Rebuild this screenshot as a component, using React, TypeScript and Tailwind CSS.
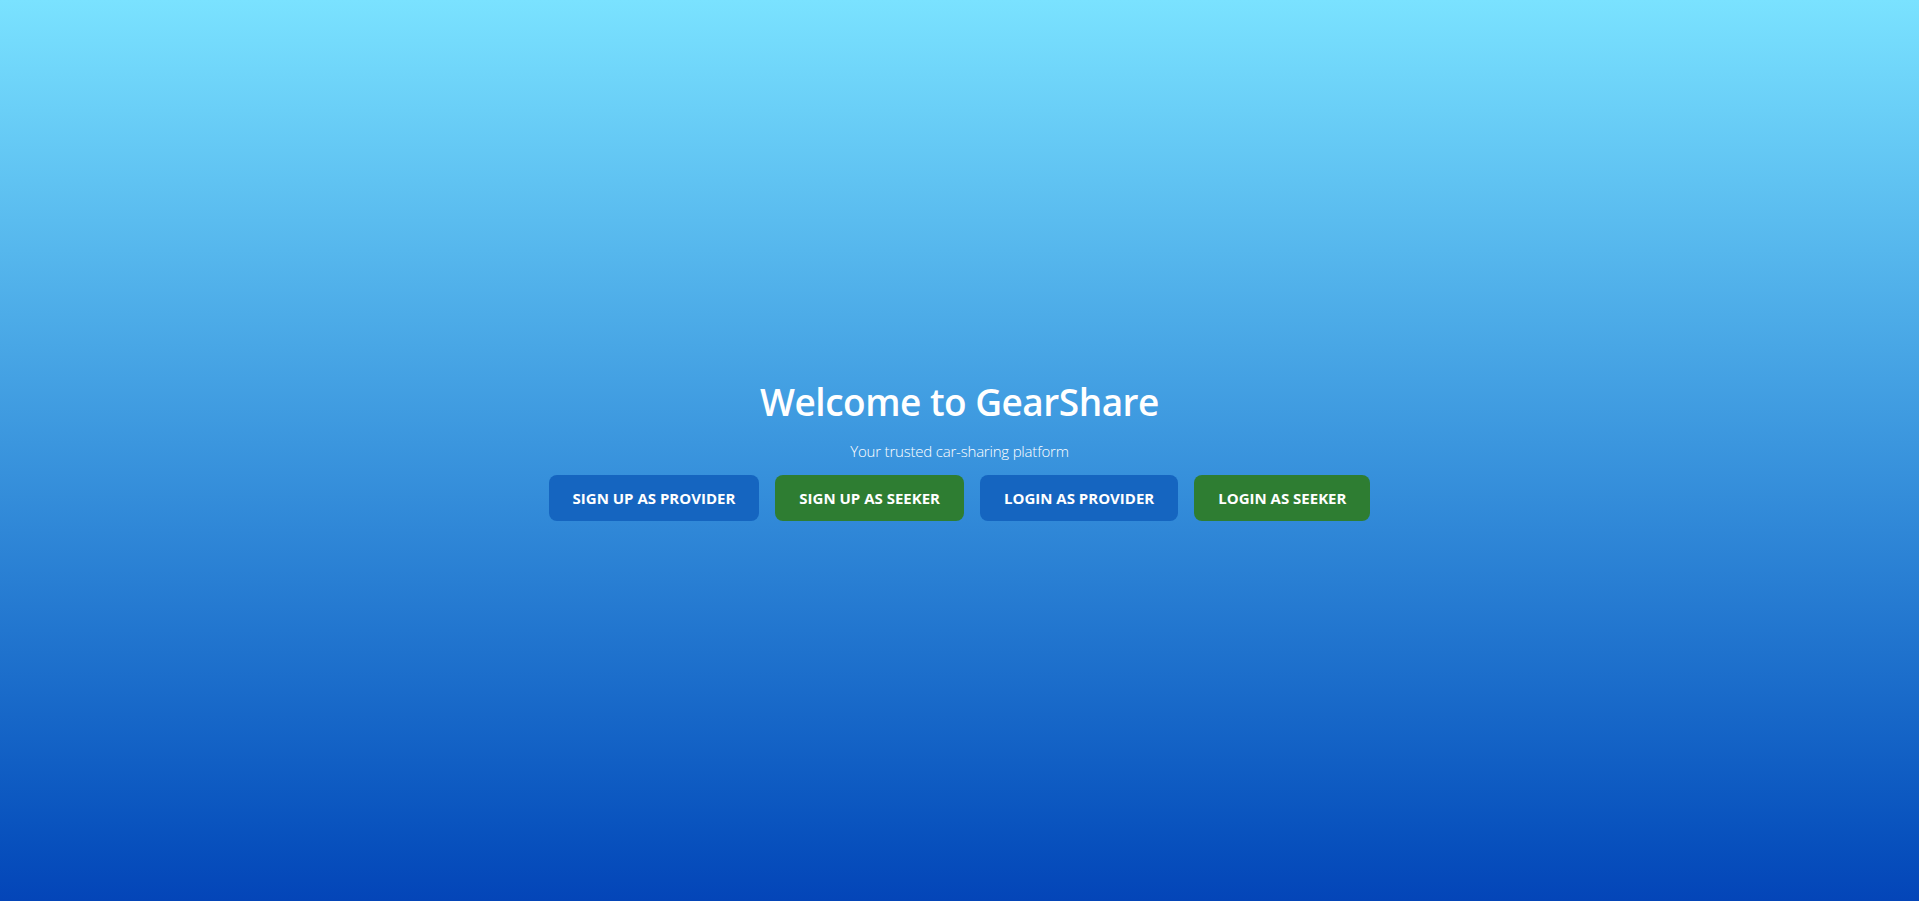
export default function App() {
  const buttons = [
    { label: 'Sign up as Provider', color: 'bg-[#1565c0]' },
    { label: 'Sign up as Seeker', color: 'bg-[#2e7d32]' },
    { label: 'Login as Provider', color: 'bg-[#1565c0]' },
    { label: 'Login as Seeker', color: 'bg-[#2e7d32]' },
  ];

  return (
    <main className="min-h-screen flex flex-col items-center justify-center bg-linear-to-b from-[#7ae2ff] to-[#0445b8] text-white font-['Open_Sans',sans-serif]">
      <h1 className="text-[37px] font-semibold leading-[1.2] tracking-[-0.5px]">Welcome to GearShare</h1>
      <p className="mt-4 text-[15px] font-light tracking-[-0.2px]">Your trusted car-sharing platform</p>
      <div className="mt-3 flex gap-4">
        {buttons.map((b) => (
          <button
            key={b.label}
            className={`${b.color} h-[46px] px-6 rounded-lg text-[15px] font-bold uppercase`}
          >
            {b.label}
          </button>
        ))}
      </div>
    </main>
  );
}
